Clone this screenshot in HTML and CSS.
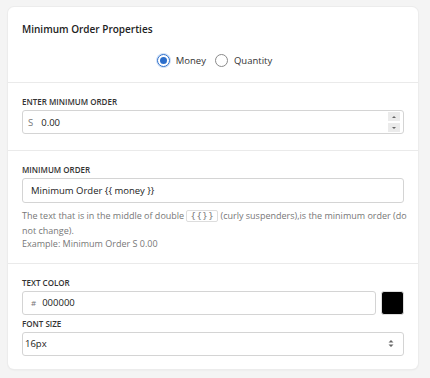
FILE: index.html
```html
<!DOCTYPE html>
<html lang="en">

<head>
    <meta charset="UTF-8">
    <title>Minimum Order Properties</title>
    <link rel="stylesheet" href="styles.css">
</head>

<body>
    <div class="card">
        <div class="section head">
            <h2>Minimum Order Properties</h2>
            <div class="radios">
                <label class="radio"><span class="dot checked"></span>Money</label>
                <label class="radio"><span class="dot"></span>Quantity</label>
            </div>
        </div>

        <div class="section">
            <div class="label">Enter minimum order</div>
            <div class="field">
                <span class="prefix">S</span>
                <span class="value">0.00</span>
                <span class="spin">
                    <span class="step"><i class="up"></i></span>
                    <span class="step"><i class="down"></i></span>
                </span>
            </div>
        </div>

        <div class="section mid">
            <div class="label">Minimum order</div>
            <div class="field text">Minimum Order {{ money }}</div>
            <p class="help">The text that is in the middle of double <code>{{}}</code> (curly suspenders),is the minimum order (do<br>not change).<br>Example: Minimum Order S 0.00</p>
        </div>

        <div class="section last">
            <div class="label">Text color</div>
            <div class="color-row">
                <div class="field">
                    <span class="prefix hash">#</span>
                    <span class="value">000000</span>
                </div>
                <div class="swatch"></div>
            </div>
            <div class="label small">Font size</div>
            <div class="field select">
                <span class="value">16px</span>
                <svg class="arrows" width="6" height="9" viewBox="0 0 6 9">
                    <path d="M0.5 3.5 L3 1 L5.5 3.5 Z M0.5 5.5 L3 8 L5.5 5.5 Z" fill="#666"/>
                </svg>
            </div>
        </div>
    </div>
</body>

</html>
```

FILE: styles.css
```css
body {
    font-family: "Open Sans", "Noto Sans", sans-serif;
    background-color: #f4f4f4;
    margin: 0;
    padding: 7px 12px 9px 8px;
    color: #333;
}

.card {
    background: #fff;
    border-radius: 6px;
    box-shadow: 0 0 0 1px #ececec, 0 1px 2px rgba(0, 0, 0, 0.08);
}

.section {
    padding: 11px 14px 16px 14px;
    border-bottom: 1px solid #eaeaea;
}

.section.mid {
    padding-bottom: 12px;
}

.section.last {
    border-bottom: none;
    padding-bottom: 13px;
}

.head {
    height: 48px;
    padding-top: 14px;
    padding-bottom: 13px;
}

h2 {
    font-size: 10px;
    line-height: 14px;
    font-weight: 600;
    margin: 1px 0 18px 0;
    color: #222;
}

.radios {
    display: flex;
    justify-content: center;
    gap: 9px;
    font-size: 9.5px;
    color: #333;
    margin-left: 3px;
}

.radio {
    display: flex;
    align-items: center;
    gap: 6px;
}

.dot {
    width: 11px;
    height: 11px;
    border: 1px solid #8a8a8a;
    border-radius: 50%;
    display: inline-block;
    position: relative;
}

.dot.checked {
    border-color: #2c6ecb;
    box-shadow: 0 0 0 1px #cfe0f7;
}

.dot.checked::after {
    content: "";
    position: absolute;
    left: 2px;
    top: 2px;
    width: 7px;
    height: 7px;
    border-radius: 50%;
    background: #2c6ecb;
}

.label {
    font-size: 8px;
    line-height: 11px;
    font-weight: 600;
    text-transform: uppercase;
    color: #333;
    margin-top: 2px;
    margin-bottom: 3px;
}

.label.small {
    margin-top: 3px;
    margin-bottom: 3px;
}

.field {
    box-sizing: border-box;
    height: 24px;
    border: 1px solid #d4d4d4;
    border-radius: 3px;
    display: flex;
    align-items: center;
    padding: 0 3px 0 5px;
    font-size: 9.5px;
    color: #222;
}

.prefix {
    color: #777;
    margin-right: 8px;
}

.hash {
    font-size: 8px;
    margin-left: 3px;
    margin-right: 6px;
}

.value {
    flex: 1;
}

.spin {
    display: flex;
    flex-direction: column;
    gap: 2px;
}

.step {
    width: 12px;
    height: 9px;
    background: #ebebeb;
    display: flex;
    align-items: center;
    justify-content: center;
}

.step i {
    width: 0;
    height: 0;
    border-left: 2px solid transparent;
    border-right: 2px solid transparent;
}

.step .up {
    border-bottom: 2px solid #666;
}

.step .down {
    border-top: 2px solid #666;
}

.field.text {
    padding-left: 8px;
    height: 25px;
}

.help {
    font-size: 9px;
    line-height: 13.5px;
    color: #777;
    margin: 6px 0 0 0;
    white-space: nowrap;
}

.help code {
    font-family: "DejaVu Sans Mono", monospace;
    font-size: 9px;
    border: 1px solid #ddd;
    border-radius: 2px;
    padding: 0 3px;
    letter-spacing: 0.5px;
    color: #777;
}

.color-row {
    display: flex;
    gap: 5px;
}

.color-row .field {
    flex: 1;
}

.swatch {
    width: 23px;
    height: 24px;
    background: #000;
    border-radius: 3px;
    border: 1px solid #ddd;
    box-sizing: border-box;
}

.field.select {
    padding-left: 2px;
    padding-right: 9px;
}
```
